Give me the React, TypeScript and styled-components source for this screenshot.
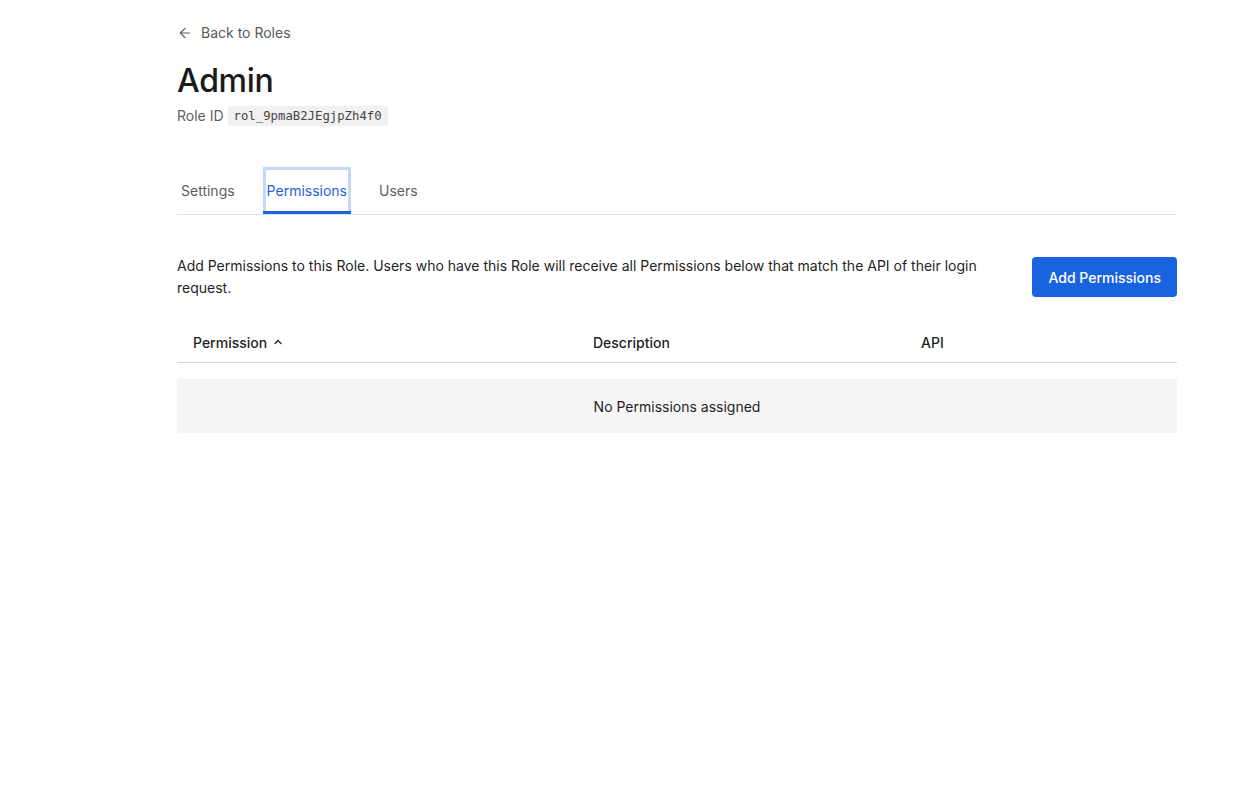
import React from "react";
import styled, { createGlobalStyle } from "styled-components";

const Global = createGlobalStyle`
  html, body { margin: 0; padding: 0; background: #fff; }
  body { font-family: Inter, "Noto Sans", sans-serif; color: #1f1f1f; -webkit-font-smoothing: antialiased; }
  * { box-sizing: border-box; }
`;

const Page = styled.main`
  width: 1000px;
  margin-left: 177px;
  padding-top: 23px;
`;

const BackLink = styled.a`
  display: inline-flex;
  align-items: center;
  gap: 8px;
  font-size: 14px;
  line-height: 20px;
  color: #5a5a5a;
  text-decoration: none;
  cursor: pointer;
`;

const Title = styled.h1`
  margin: 16px 0 0;
  font-size: 32px;
  line-height: 40px;
  font-weight: 500;
  letter-spacing: -0.3px;
  color: #1a1a1a;
`;

const IdRow = styled.div`
  display: flex;
  align-items: center;
  gap: 4px;
  margin-top: 5px;
  font-size: 14px;
  line-height: 20px;
  color: #5f5f5f;
`;

const Code = styled.code`
  font-family: "DejaVu Sans Mono", "Liberation Mono", monospace;
  font-size: 12.3px;
  line-height: 20px;
  padding: 0 6px;
  background: #f1f1f1;
  border-radius: 4px;
  color: #444;
`;

const Tabs = styled.nav`
  display: flex;
  gap: 24px;
  margin-top: 41px;
  border-bottom: 1px solid #e3e3e3;
`;

const Tab = styled.button<{ $active?: boolean }>`
  position: relative;
  height: 47px;
  padding: 0 4px;
  border: none;
  background: none;
  font-family: inherit;
  font-size: 14px;
  color: ${(p) => (p.$active ? "#1f62dd" : "#5e5e5e")};
  cursor: pointer;
  ${(p) =>
    p.$active &&
    `
    box-shadow: inset 0 0 0 3px #c5d8fa;
    &::after {
      content: "";
      position: absolute;
      left: 0; right: 0; bottom: 0;
      height: 3px;
      background: #1f62dd;
    }
  `}
`;

const Intro = styled.div`
  display: flex;
  align-items: center;
  justify-content: space-between;
  gap: 48px;
  margin-top: 40px;
`;

const IntroText = styled.p`
  margin: 0;
  max-width: 820px;
  font-size: 14px;
  line-height: 22px;
  color: #1f1f1f;
`;

const PrimaryButton = styled.button`
  flex-shrink: 0;
  height: 40px;
  padding: 0 16px;
  border: none;
  border-radius: 4px;
  background: #1a63e0;
  color: #fff;
  font-family: inherit;
  font-size: 14px;
  font-weight: 500;
  cursor: pointer;
`;

const Table = styled.div`
  margin-top: 23px;
`;

const HeaderRow = styled.div`
  display: grid;
  grid-template-columns: 400px 328px 1fr;
  height: 41px;
  align-items: center;
  border-bottom: 1px solid #d9d9d9;
`;

const HeaderCell = styled.div`
  display: flex;
  align-items: center;
  gap: 5px;
  padding: 0 16px;
  font-size: 14px;
  font-weight: 500;
  color: #1f1f1f;
`;

const EmptyRow = styled.div`
  margin-top: 16px;
  height: 54px;
  display: flex;
  align-items: center;
  justify-content: center;
  background: #f5f5f5;
  font-size: 14px;
  color: #1f1f1f;
`;

const ArrowLeft = () => (
  <svg width="16" height="16" viewBox="0 0 24 24" fill="none" stroke="currentColor" strokeWidth="1.8" strokeLinecap="round" strokeLinejoin="round">
    <path d="M19 12H5" />
    <path d="M12 19l-7-7 7-7" />
  </svg>
);

const ChevronUp = () => (
  <svg width="12" height="12" viewBox="0 0 24 24" fill="none" stroke="currentColor" strokeWidth="2.6" strokeLinecap="round" strokeLinejoin="round">
    <path d="M6 15l6-6 6 6" />
  </svg>
);

export default function App() {
  return (
    <>
      <Global />
      <Page>
        <BackLink>
          <ArrowLeft />
          Back to Roles
        </BackLink>
        <Title>Admin</Title>
        <IdRow>
          Role ID <Code>rol_9pmaB2JEgjpZh4f0</Code>
        </IdRow>
        <Tabs>
          <Tab>Settings</Tab>
          <Tab $active>Permissions</Tab>
          <Tab>Users</Tab>
        </Tabs>
        <Intro>
          <IntroText>
            Add Permissions to this Role. Users who have this Role will receive all Permissions below that match the API of their login request.
          </IntroText>
          <PrimaryButton>Add Permissions</PrimaryButton>
        </Intro>
        <Table>
          <HeaderRow>
            <HeaderCell>
              Permission <ChevronUp />
            </HeaderCell>
            <HeaderCell>Description</HeaderCell>
            <HeaderCell>API</HeaderCell>
          </HeaderRow>
          <EmptyRow>No Permissions assigned</EmptyRow>
        </Table>
      </Page>
    </>
  );
}
